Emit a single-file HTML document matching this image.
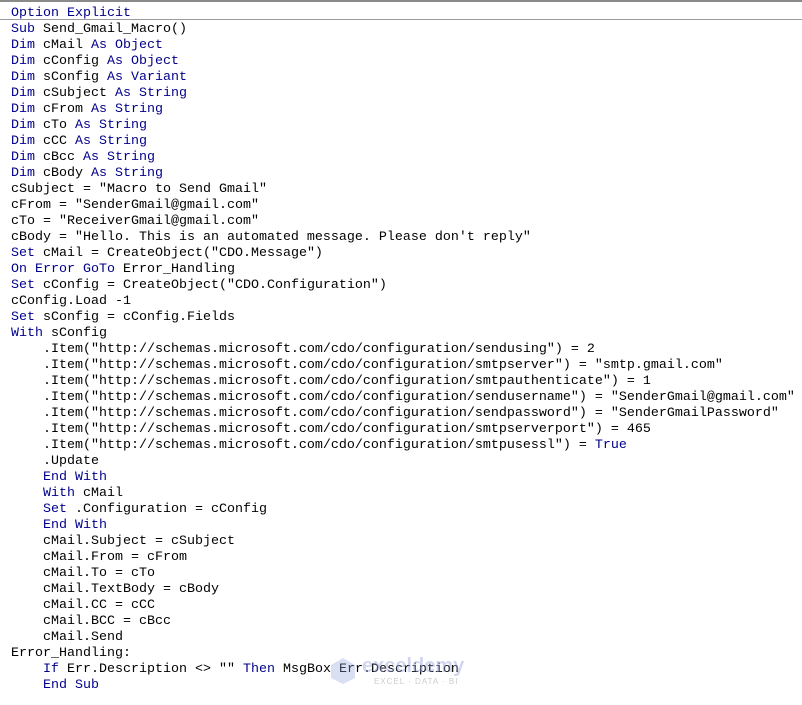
<!DOCTYPE html>
<html><head><meta charset="utf-8"><style>
html,body{margin:0;padding:0;background:#fff;width:802px;height:705px;overflow:hidden;position:relative}
.top{position:absolute;left:0;top:0;width:802px;height:2px;background:#8a8a8a}
.sep{position:absolute;left:0;top:19px;width:802px;height:1px;background:#9a9a9a}
.code{position:absolute;left:11px;top:6px;font-family:"Liberation Mono","Courier New",monospace;font-size:13.33px;line-height:16px;color:#000}
.code div{height:16px;white-space:pre}
.k{color:#00008b}
.wm{position:absolute;left:330px;top:655px;font-family:"Liberation Sans",sans-serif;color:rgba(150,165,220,0.45)}
</style></head><body>
<div class="top"></div><div class="sep"></div>
<div class="code">
<div><span class="k">Option Explicit</span></div>
<div><span class="k">Sub</span> Send_Gmail_Macro()</div>
<div><span class="k">Dim</span> cMail <span class="k">As Object</span></div>
<div><span class="k">Dim</span> cConfig <span class="k">As Object</span></div>
<div><span class="k">Dim</span> sConfig <span class="k">As Variant</span></div>
<div><span class="k">Dim</span> cSubject <span class="k">As String</span></div>
<div><span class="k">Dim</span> cFrom <span class="k">As String</span></div>
<div><span class="k">Dim</span> cTo <span class="k">As String</span></div>
<div><span class="k">Dim</span> cCC <span class="k">As String</span></div>
<div><span class="k">Dim</span> cBcc <span class="k">As String</span></div>
<div><span class="k">Dim</span> cBody <span class="k">As String</span></div>
<div>cSubject = "Macro to Send Gmail"</div>
<div>cFrom = "SenderGmail@gmail.com"</div>
<div>cTo = "ReceiverGmail@gmail.com"</div>
<div>cBody = "Hello. This is an automated message. Please don't reply"</div>
<div><span class="k">Set</span> cMail = CreateObject("CDO.Message")</div>
<div><span class="k">On Error GoTo</span> Error_Handling</div>
<div><span class="k">Set</span> cConfig = CreateObject("CDO.Configuration")</div>
<div>cConfig.Load -1</div>
<div><span class="k">Set</span> sConfig = cConfig.Fields</div>
<div><span class="k">With</span> sConfig</div>
<div>    .Item("http://schemas.microsoft.com/cdo/configuration/sendusing") = 2</div>
<div>    .Item("http://schemas.microsoft.com/cdo/configuration/smtpserver") = "smtp.gmail.com"</div>
<div>    .Item("http://schemas.microsoft.com/cdo/configuration/smtpauthenticate") = 1</div>
<div>    .Item("http://schemas.microsoft.com/cdo/configuration/sendusername") = "SenderGmail@gmail.com"</div>
<div>    .Item("http://schemas.microsoft.com/cdo/configuration/sendpassword") = "SenderGmailPassword"</div>
<div>    .Item("http://schemas.microsoft.com/cdo/configuration/smtpserverport") = 465</div>
<div>    .Item("http://schemas.microsoft.com/cdo/configuration/smtpusessl") = <span class="k">True</span></div>
<div>    .Update</div>
<div>    <span class="k">End With</span></div>
<div>    <span class="k">With</span> cMail</div>
<div>    <span class="k">Set</span> .Configuration = cConfig</div>
<div>    <span class="k">End With</span></div>
<div>    cMail.Subject = cSubject</div>
<div>    cMail.From = cFrom</div>
<div>    cMail.To = cTo</div>
<div>    cMail.TextBody = cBody</div>
<div>    cMail.CC = cCC</div>
<div>    cMail.BCC = cBcc</div>
<div>    cMail.Send</div>
<div>Error_Handling:</div>
<div>    <span class="k">If</span> Err.Description &lt;&gt; "" <span class="k">Then</span> MsgBox Err.Description</div>
<div>    <span class="k">End Sub</span></div>
</div>
<div class="wm"><svg width="26" height="28" style="position:absolute;left:0;top:2px"><polygon points="13,1 25,8 25,21 13,27 1,21 1,8" fill="rgba(150,165,220,0.35)"/></svg>
<span style="position:absolute;left:32px;top:0;font-size:20px;font-weight:bold;white-space:nowrap">exceldemy</span>
<span style="position:absolute;left:44px;top:22px;font-size:8px;letter-spacing:1px;white-space:nowrap;color:rgba(170,170,170,0.6)">EXCEL · DATA · BI</span></div>
</body></html>
